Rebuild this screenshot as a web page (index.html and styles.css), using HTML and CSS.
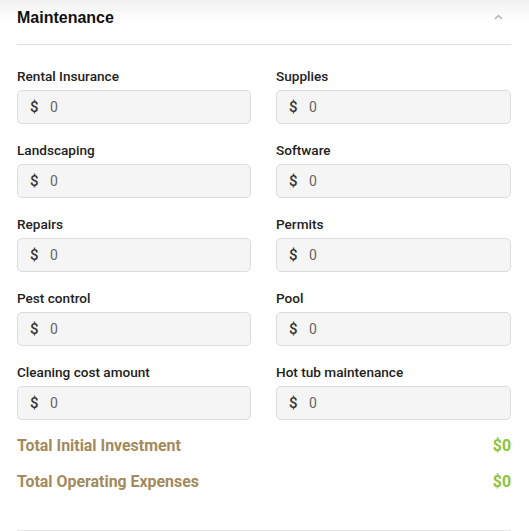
FILE: index.html
```html
<!DOCTYPE html>
<html>
<head>
<meta charset="utf-8">
<link rel="stylesheet" href="styles.css">
</head>
<body>
<div class="panel">
  <div class="header">
    <h2 class="title">Maintenance</h2>
    <svg class="chevron" width="9" height="6" viewBox="0 0 9 6"><path d="M1 5 L4.5 1.5 L8 5" fill="none" stroke="#a9a9a9" stroke-width="1.2"/></svg>
  </div>
  <div class="grid">
    <div class="field"><label class="label">Rental Insurance</label><div class="input"><span class="cur">$</span><span class="val">0</span></div></div>
    <div class="field"><label class="label">Supplies</label><div class="input"><span class="cur">$</span><span class="val">0</span></div></div>
    <div class="field"><label class="label">Landscaping</label><div class="input"><span class="cur">$</span><span class="val">0</span></div></div>
    <div class="field"><label class="label">Software</label><div class="input"><span class="cur">$</span><span class="val">0</span></div></div>
    <div class="field"><label class="label">Repairs</label><div class="input"><span class="cur">$</span><span class="val">0</span></div></div>
    <div class="field"><label class="label">Permits</label><div class="input"><span class="cur">$</span><span class="val">0</span></div></div>
    <div class="field"><label class="label">Pest control</label><div class="input"><span class="cur">$</span><span class="val">0</span></div></div>
    <div class="field"><label class="label">Pool</label><div class="input"><span class="cur">$</span><span class="val">0</span></div></div>
    <div class="field"><label class="label">Cleaning cost amount</label><div class="input"><span class="cur">$</span><span class="val">0</span></div></div>
    <div class="field"><label class="label">Hot tub maintenance</label><div class="input"><span class="cur">$</span><span class="val">0</span></div></div>
  </div>
  <div class="totals">
    <div class="total-row"><span class="total-label">Total Initial Investment</span><span class="total-val">$0</span></div>
    <div class="total-row"><span class="total-label">Total Operating Expenses</span><span class="total-val">$0</span></div>
  </div>
  <div class="bottom-line"></div>
</div>
</body>
</html>
```

FILE: styles.css
```css
html, body {
  margin: 0;
  padding: 0;
  background: #ffffff;
}
body {
  background: linear-gradient(to bottom, #f1f1f1 0px, #ffffff 22px) no-repeat;
  font-family: Roboto, "Liberation Sans", sans-serif;
}
.panel {
  padding: 0 18px 0 17px;
}
.header {
  border-bottom: 1px solid #dedede;
  display: flex;
  align-items: center;
  justify-content: space-between;
  box-sizing: border-box;
  height: 45px;
  padding-bottom: 8px;
}
.title {
  margin: 0;
  font-family: "Liberation Sans", Arial, sans-serif;
  font-weight: bold;
  font-size: 16px;
  color: #111;
  line-height: 20px;
}
.chevron {
  margin-right: 8px;
  margin-top: -2px;
}
.grid {
  margin-top: 23px;
  display: grid;
  grid-template-columns: 234px 235px;
  column-gap: 25px;
  row-gap: 18px;
}
.field {
  display: flex;
  flex-direction: column;
}
.label {
  font-size: 13.6px;
  font-weight: 500;
  color: #222;
  line-height: 17px;
  margin-bottom: 5px;
}
.input {
  height: 34px;
  box-sizing: border-box;
  background: #f5f5f5;
  border: 1px solid #dcdcdc;
  border-radius: 5px;
  display: flex;
  align-items: center;
  padding-left: 12px;
}
.cur {
  font-size: 15px;
  font-weight: 500;
  color: #333;
  width: 20px;
}
.val {
  font-size: 14px;
  color: #666;
}
.totals {
  margin-top: 16px;
  display: flex;
  flex-direction: column;
  gap: 16px;
}
.total-row {
  display: flex;
  justify-content: space-between;
  line-height: 20px;
  font-size: 15.9px;
  font-weight: bold;
}
.total-label {
  color: #a38a5c;
}
.total-val {
  color: #8cc43c;
}
.bottom-line {
  margin-top: 38px;
  border-top: 1px solid #e6e6e6;
}
```
